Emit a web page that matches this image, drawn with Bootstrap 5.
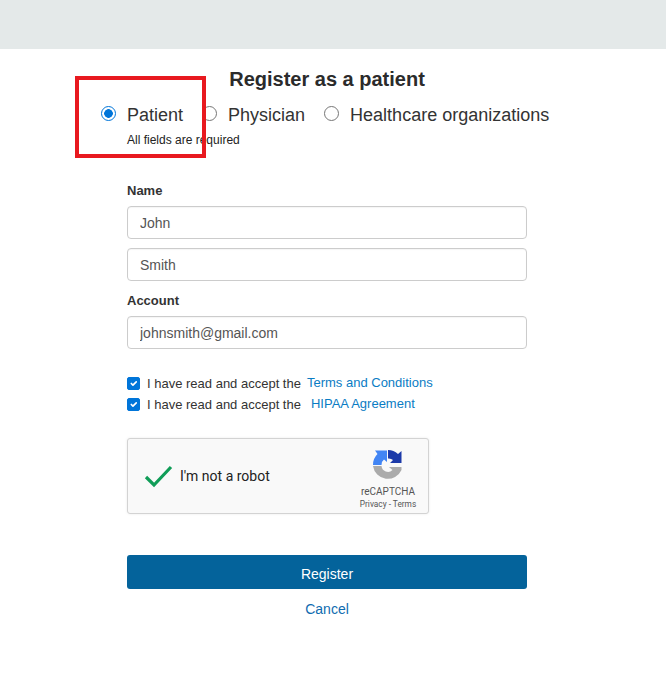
<!DOCTYPE html>
<html lang="en">
<head>
<meta charset="utf-8">
<title>Register</title>
<link href="https://cdn.jsdelivr.net/npm/bootstrap@5.3.0/dist/css/bootstrap.min.css" rel="stylesheet">
<style>
html,body{height:100%;}
body{font-family:"Liberation Sans",Arial,sans-serif;background:#fff;color:#333;position:relative;overflow:hidden;}
.top-band{height:49px;background:#e4e9e9;}
.reg-wrap{width:400px;margin-left:127px;}
.reg-title{font-size:20px;font-weight:700;line-height:24px;text-align:center;color:#2b2b2b;margin:18px 0 0;}
.role-row{margin-left:-26px;margin-top:9px;height:30px;width:470px;gap:19px;}
.role-item{display:flex;align-items:center;font-size:18px;line-height:30px;color:#333;}
.role-item .form-check-input{width:15px;height:15px;margin:0 11px 3px 0;border-color:#767676;flex:none;}
.role-item .form-check-input:checked{background-color:#fff;background-image:radial-gradient(circle,#0075d9 0 4px,#fff 4.6px);border:1.5px solid #0075d9;}
.req-note{font-size:12px;line-height:16px;color:#222;margin:2px 0 0;}
.reg-form{margin-top:35px;}
.fld-label{font-size:13px;font-weight:700;line-height:16px;color:#333;margin:0 0 7px;display:block;}
.fld-label-next{margin-top:12px;}
.fld-input{height:33px;border:1px solid #ccc;border-radius:4px;font-size:14px;color:#555;padding:0 12px;width:100%;box-shadow:0 1px 1px rgba(0,0,0,.04) inset;}
.fld-input-next{margin-top:9px;}
.chk-group{margin-top:24px;}
.chk-row{font-size:13px;line-height:21px;height:21px;color:#333;display:flex;align-items:center;}
.chk-row .form-check-input{width:13px;height:13px;margin:0 7px 0 0;border-radius:2px;background-color:#0075d9;border-color:#0075d9;flex:none;}
.chk-row a{color:#0a7cc4;text-decoration:none;position:relative;top:-1px;margin-left:6px;}
.chk-row a.link-wide{margin-left:10px;}
.cap-box{width:302px;height:76px;background:#f9f9f9;border:1px solid #d3d3d3;border-radius:3px;box-shadow:0 0 3px rgba(0,0,0,.08);margin-top:23px;padding-left:16px;color:#222;font-family:Roboto,"Liberation Sans",sans-serif;}
.cap-text{font-size:14px;margin-left:6px;}
.cap-logo{width:88px;font-size:10px;line-height:12px;color:#555;text-align:center;margin:7px -4px 0 auto;}
.cap-logo svg{display:block;margin:0 auto 5px;}
.cap-logo small{display:block;font-size:8.300px;line-height:12px;color:#555;}
.reg-btn{display:block;width:100%;height:34px;background:#04639b;border:0;border-radius:3px;color:#fff;font-size:14px;padding:4px 0 0;margin-top:41px;}
.reg-btn:hover{background:#04639b;color:#fff;}
.cancel-link{display:block;text-align:center;color:#0f6cb0;text-decoration:none;font-size:14px;line-height:20px;margin-top:10px;}
.red-mark{position:absolute;left:75px;top:76px;width:131px;height:82px;border:4px solid #e8191f;pointer-events:none;}
</style>
</head>
<body>
<div class="top-band"></div>
<div class="reg-wrap">
  <h1 class="reg-title">Register as a patient</h1>
  <div class="role-row d-flex align-items-center">
    <label class="role-item"><input class="form-check-input" type="radio" name="role" checked>Patient</label>
    <label class="role-item"><input class="form-check-input" type="radio" name="role">Physician</label>
    <label class="role-item"><input class="form-check-input" type="radio" name="role">Healthcare organizations</label>
  </div>
  <p class="req-note">All fields are required</p>
  <form class="reg-form">
    <label class="fld-label">Name</label>
    <input class="form-control fld-input" type="text" value="John">
    <input class="form-control fld-input fld-input-next" type="text" value="Smith">
    <label class="fld-label fld-label-next">Account</label>
    <input class="form-control fld-input" type="text" value="johnsmith@gmail.com">
    <div class="chk-group">
      <div class="chk-row"><input class="form-check-input" type="checkbox" checked>I have read and accept the<a href="#">Terms and Conditions</a></div>
      <div class="chk-row"><input class="form-check-input" type="checkbox" checked>I have read and accept the<a class="link-wide" href="#">HIPAA Agreement</a></div>
    </div>
    <div class="cap-box d-flex align-items-center">
      <svg width="30" height="24" viewBox="0 0 30 24" fill="none"><path d="M2 13l8 8L27 3" stroke="#109d58" stroke-width="3.2"/></svg>
      <span class="cap-text">I'm not a robot</span>
      <div class="cap-logo">
        <svg width="32" height="32" viewBox="0 0 32 32">
          <path d="M1 16A15 15 0 0 1 5.500 5L3 1.500H15V13L12 10.500A6.500 6.500 0 0 0 9.500 16Z" fill="#4285f4"/>
          <path d="M16 1A15 15 0 0 1 26 5L29.500 2V14H18L21 11A6.500 6.500 0 0 0 16 9.500Z" fill="#1c3aa9"/>
          <path d="M1 17H9.500A6.500 6.500 0 0 0 20.500 21L17 18H29.500V21A15 15 0 0 1 1 17Z" fill="#ababab"/>
        </svg>
        reCAPTCHA
        <small>Privacy - Terms</small>
      </div>
    </div>
    <button type="button" class="btn reg-btn">Register</button>
    <a class="cancel-link" href="#">Cancel</a>
  </form>
</div>
<div class="red-mark"></div>
<script src="https://cdn.jsdelivr.net/npm/bootstrap@5.3.0/dist/js/bootstrap.bundle.min.js"></script>
</body>
</html>
